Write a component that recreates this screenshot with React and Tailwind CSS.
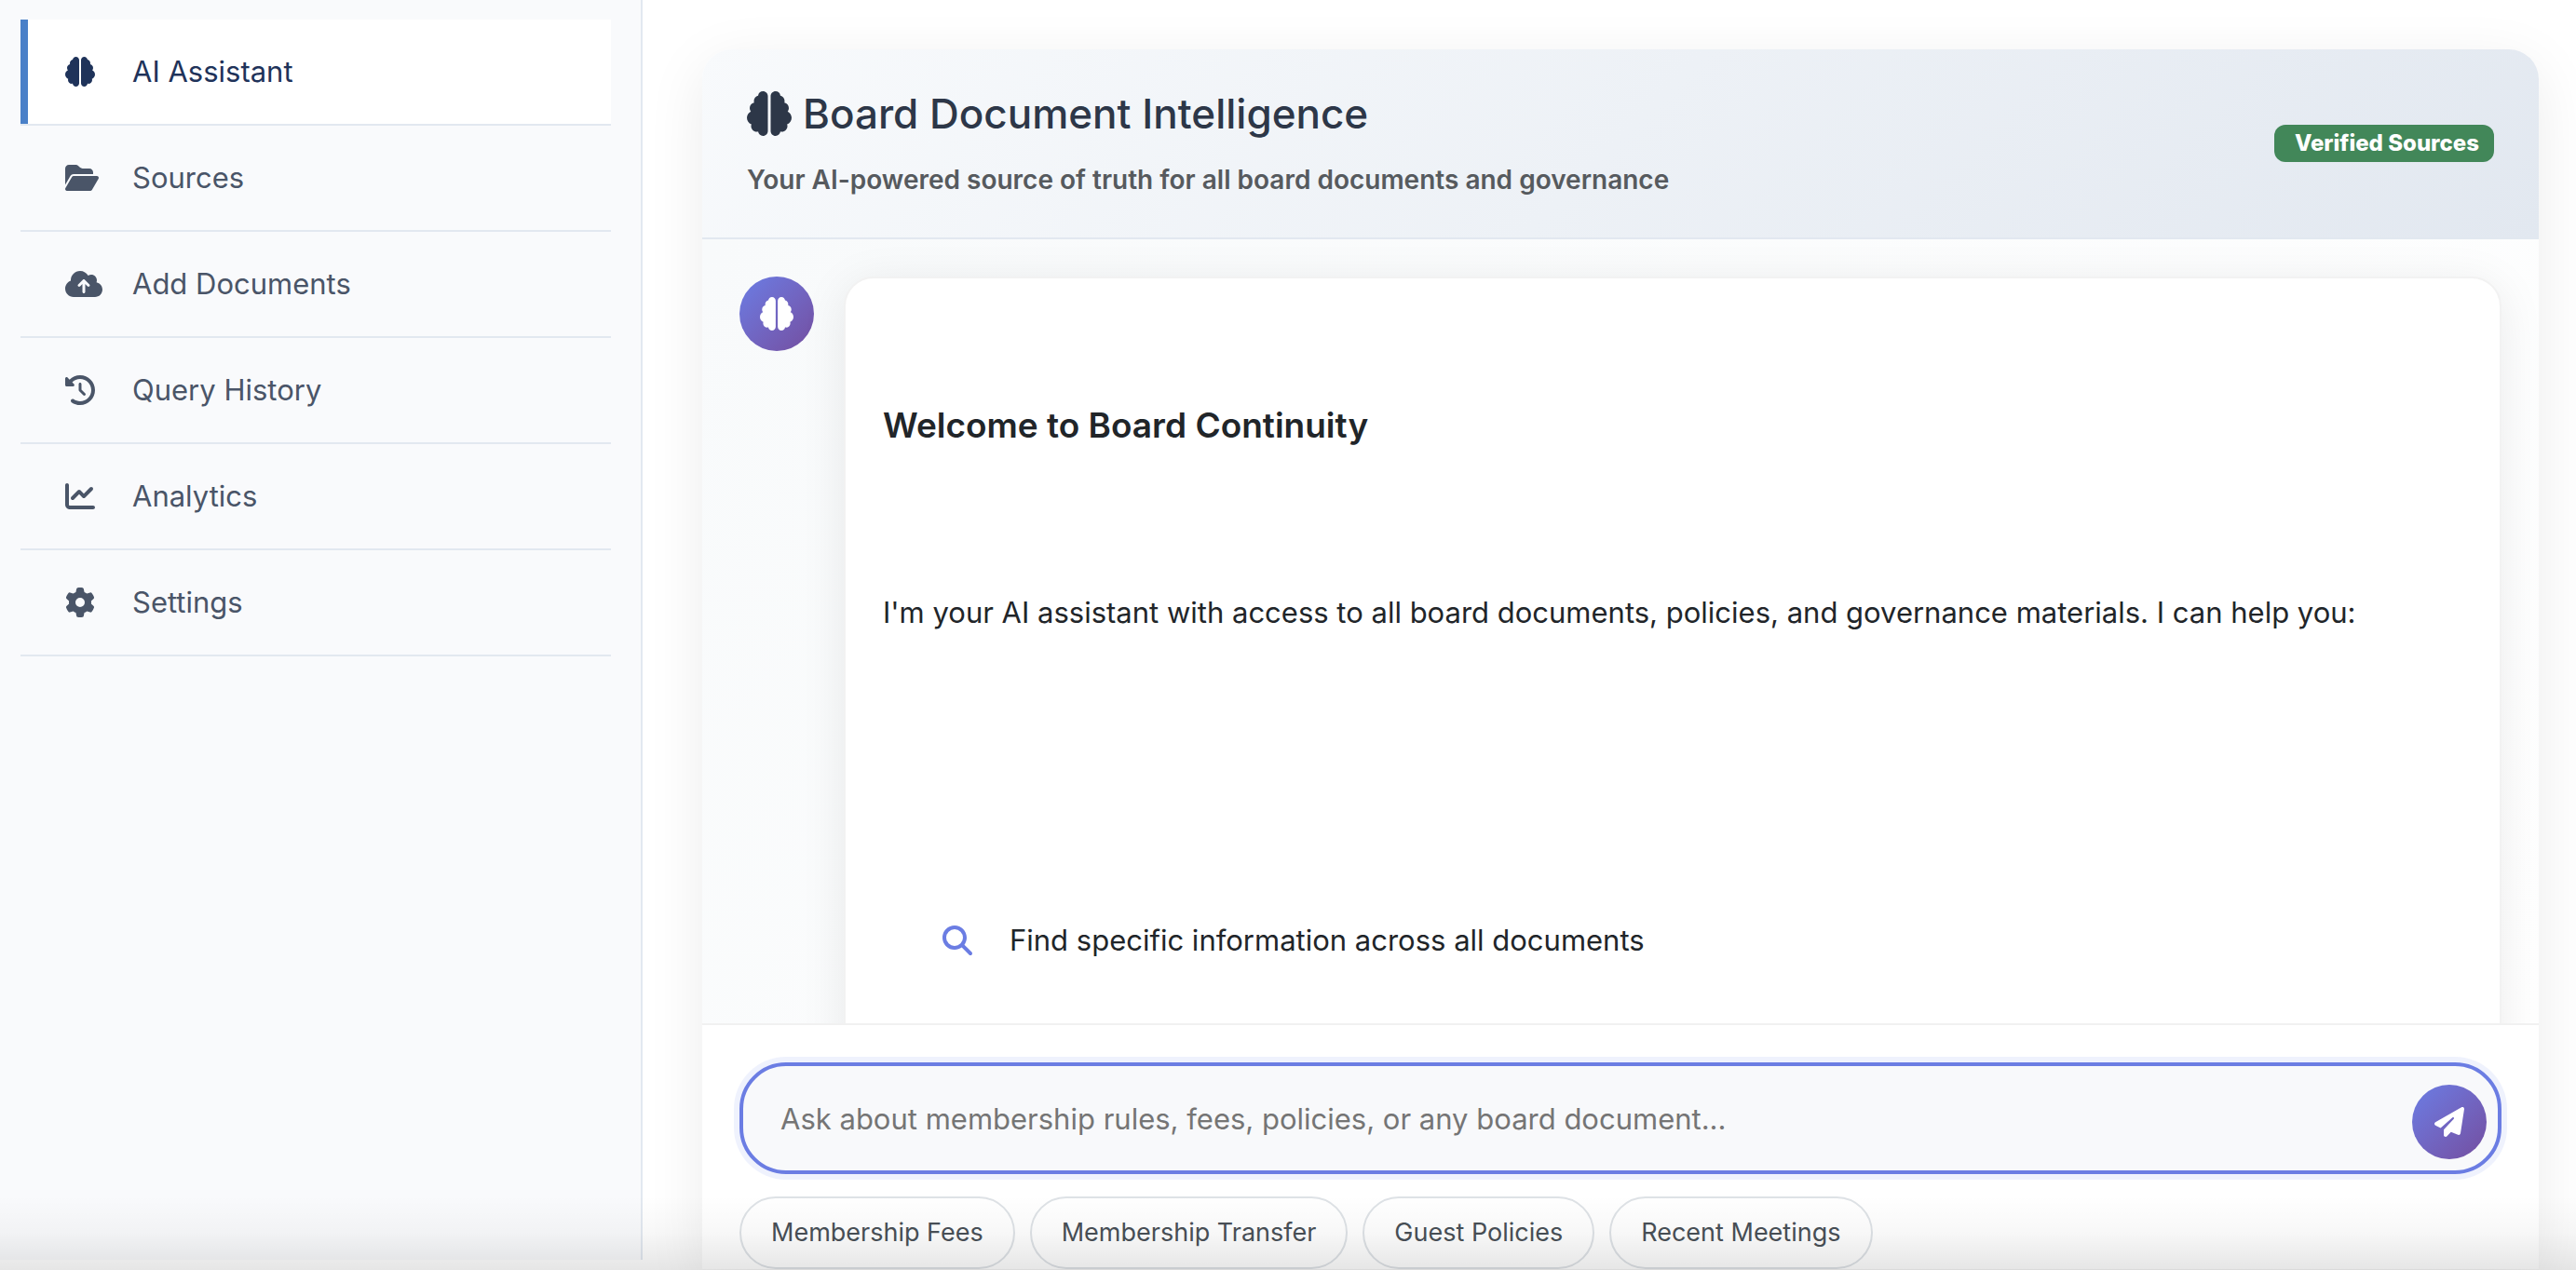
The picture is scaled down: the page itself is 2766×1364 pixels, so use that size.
import React from "react";
import {
  FaBrain,
  FaFolderOpen,
  FaCloudArrowUp,
  FaClockRotateLeft,
  FaChartLine,
  FaGear,
  FaMagnifyingGlass,
  FaPaperPlane,
} from "react-icons/fa6";

const navItems = [
  { label: "AI Assistant", icon: FaBrain, iconWidth: "w-8", active: true },
  { label: "Sources", icon: FaFolderOpen, iconWidth: "w-9" },
  { label: "Add Documents", icon: FaCloudArrowUp, iconWidth: "w-10" },
  { label: "Query History", icon: FaClockRotateLeft, iconWidth: "w-8" },
  { label: "Analytics", icon: FaChartLine, iconWidth: "w-8" },
  { label: "Settings", icon: FaGear, iconWidth: "w-8" },
];

const suggestions = ["Membership Fees", "Membership Transfer", "Guest Policies", "Recent Meetings"];

function Sidebar() {
  return (
    <aside className="w-[690px] shrink-0 border-r-2 border-[#e2e8f0] bg-[#f9fafc] pt-[21px] pr-8 pl-[22px]">
      <nav aria-label="Main">
        {navItems.map(({ label, icon: Icon, iconWidth, active }) => (
          <div key={label} className="border-b-2 border-[#e2e8f0]">
            <a
              href="#"
              aria-current={active ? "page" : undefined}
              className={
                active
                  ? "flex h-28 items-center border-l-8 border-[#4a80c8] bg-white pl-10 text-[31px] text-[#1f335a]"
                  : "flex h-28 items-center border-l-8 border-transparent pl-10 text-[31px] text-[#4a5568]"
              }
            >
              <span className="mr-8 w-10">
                <Icon className={`h-8 ${iconWidth}`} />
              </span>
              {label}
            </a>
          </div>
        ))}
      </nav>
    </aside>
  );
}

function Header() {
  return (
    <header className="flex items-center justify-between border-b-2 border-[#e2e8f0] bg-linear-135 from-[#f8fafc] to-[#e2e8f0] px-12 py-10">
      <div>
        <h1 className="flex items-center gap-3 text-[44px] leading-[58px] font-medium text-[#2d3748]">
          <FaBrain className="size-12" />
          Board Document Intelligence
        </h1>
        <p className="mt-5 text-[28px] leading-11 font-semibold text-[#565a5e]">
          Your AI-powered source of truth for all board documents and governance
        </p>
      </div>
      <span className="rounded-xl bg-[#428759] pr-4 pl-[22px] text-[24px] leading-10 font-extrabold text-white">
        Verified Sources
      </span>
    </header>
  );
}

function Messages() {
  return (
    <section
      aria-label="Conversation"
      className="flex h-[842px] items-start gap-8 overflow-hidden bg-linear-135 from-[#f8fafb] to-white p-10"
    >
      <div className="flex size-20 shrink-0 items-center justify-center rounded-full bg-linear-135 from-[#6a7de5] to-[#734ea0] text-white">
        <FaBrain className="size-9" />
      </div>
      <article className="min-h-[1000px] grow rounded-[32px] border-2 border-[#f2f2f2] bg-white px-10 text-[31px] text-[#212529] shadow-[0_8px_50px_rgba(0,0,0,0.08)]">
        <h2 className="mt-[134px] text-[37px] leading-12 font-semibold">Welcome to Board Continuity</h2>
        <p className="mt-[150px] leading-[54px]">
          I'm your AI assistant with access to all board documents, policies, and governance materials. I can help you:
        </p>
        <ul className="mt-[298px] pl-16">
          <li className="flex items-center gap-10 leading-[54px]">
            <FaMagnifyingGlass className="size-8 text-[#6b7de3]" />
            Find specific information across all documents
          </li>
        </ul>
      </article>
    </section>
  );
}

function Composer() {
  return (
    <form className="border-t-2 border-[#f1f1f1] bg-white px-10 pt-10" onSubmit={(e) => e.preventDefault()}>
      <div className="relative">
        <input
          type="text"
          aria-label="Ask a question"
          placeholder="Ask about membership rules, fees, policies, or any board document..."
          className="block h-[120px] w-full rounded-[50px] border-4 border-[#6b7de3] bg-[#f8f9fb] pr-28 pl-10 text-[31px] text-[#212529] ring-6 ring-[#667eea]/10 outline-none placeholder:text-[#757575]"
        />
        <button
          type="submit"
          aria-label="Send"
          className="absolute right-4 bottom-4 flex size-20 items-center justify-center rounded-full bg-linear-135 from-[#6a7de5] to-[#734ea0] text-white"
        >
          <FaPaperPlane className="size-8" />
        </button>
      </div>
      <div className="mt-6 flex gap-4">
        {suggestions.map((label) => (
          <button
            key={label}
            type="button"
            className="h-[78px] rounded-full border-2 border-[#dee2e6] bg-white px-8 text-[27px] text-[#495057]"
          >
            {label}
          </button>
        ))}
      </div>
    </form>
  );
}

export default function App() {
  return (
    <div className="relative h-screen overflow-hidden bg-white font-['Inter',sans-serif]">
      <div className="flex h-full">
        <div className="flex pb-[11px]">
          <Sidebar />
        </div>
        <main className="grow pt-[53px] pr-10 pl-16">
          <div className="overflow-hidden rounded-t-[32px] shadow-[0_16px_64px_rgba(0,0,0,0.08)]">
            <Header />
            <Messages />
            <Composer />
          </div>
        </main>
      </div>
      <div className="pointer-events-none absolute inset-x-0 bottom-0 h-20 bg-linear-to-t from-black/10 via-black/3 to-transparent" />
    </div>
  );
}
